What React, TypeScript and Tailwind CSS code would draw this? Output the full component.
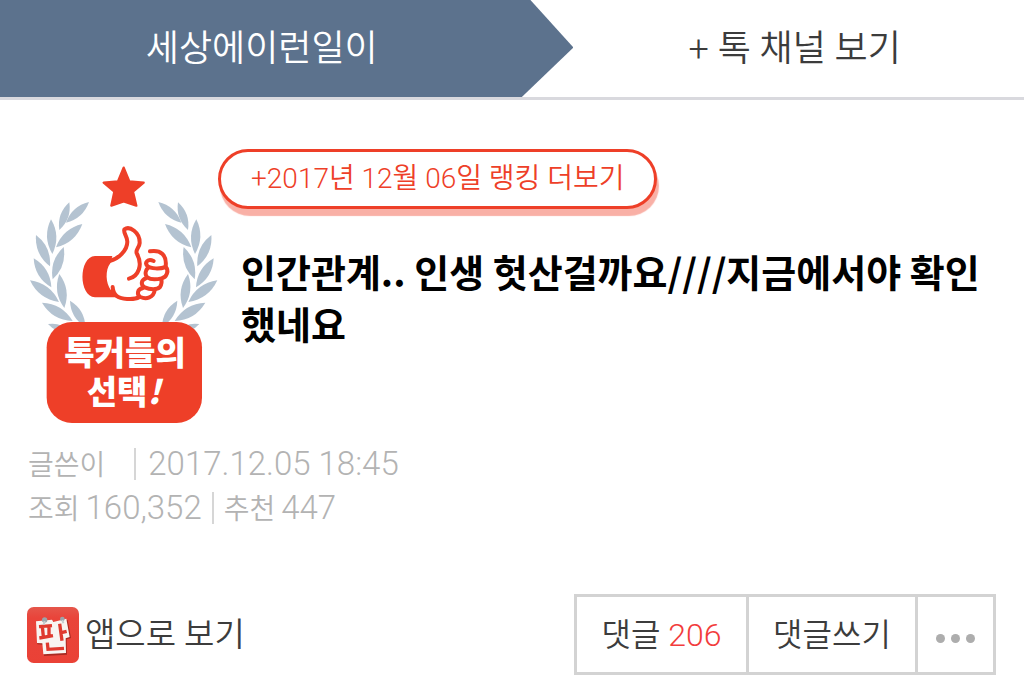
import { Fragment } from 'react';

type Leaf = [number, number, number, number];

// tip x, tip y, base x, base y
const leaves: Leaf[] = [
  [207, 156, 138, 218],
  [148, 157, 118, 240],
  [187, 222, 108, 292],
  [93, 208, 97, 312],
  [48, 255, 90, 349],
  [131, 291, 98, 388],
  [41, 325, 94, 412],
  [30, 391, 117, 456],
  [118, 372, 133, 474],
  [66, 458, 158, 513],
  [150, 452, 196, 530],
  [84, 522, 150, 545],
];

const leafPath = ([x1, y1, x2, y2]: Leaf) => {
  const dx = (x2 - x1) * 0.27;
  const dy = (y2 - y1) * 0.27;
  const mx = (x1 + x2) / 2;
  const my = (y1 + y2) / 2;
  return `M${x1} ${y1}Q${mx - dy} ${my + dx} ${x2} ${y2}Q${mx + dy} ${my - dx} ${x1} ${y1}Z`;
};

const Laurel = () => (
  <g fill="#b4c3d1">
    {leaves.map((leaf) => (
      <path key={leaf.join('-')} d={leafPath(leaf)} />
    ))}
  </g>
);

const TalkerBadge = () => (
  <svg
    viewBox="21 45 579 780"
    className="h-[260px] w-[193px] shrink-0"
    role="img"
    aria-label="톡커들의 선택!"
  >
    <Laurel />
    <g transform="translate(622 0) scale(-1 1)">
      <Laurel />
    </g>
    <path
      d="M311 53L328 94L371 98L339 125L349 167L311 154L274 167L283 125L251 98L294 94Z"
      fill="#ee3f28"
      stroke="#ee3f28"
      strokeWidth="7"
      strokeLinejoin="round"
    />
    <g transform="translate(165 195)">
      <path
        d="M112 123H60C10 126 10 244 60 247H126L112 212L108 226C92 205 90 165 106 145Z"
        fill="#ee3f28"
      />
      <g
        fill="none"
        stroke="#ee3f28"
        strokeWidth="12"
        strokeLinecap="round"
        strokeLinejoin="round"
      >
        <path d="M104 138C130 132 157 106 157 80C157 64 144 54 148 43C164 32 195 52 194 84C193 98 181 104 185 115C205 150 190 184 162 191" />
        <path d="M113 216C114 236 126 251 156 252C172 253 182 253 192 247" />
        <path d="M225 109C258 104 276 120 272 154" />
        <path d="M236 138C218 130 208 142 217 153C228 162 255 162 272 156C283 166 275 188 260 190C244 194 226 194 217 187C208 178 212 166 219 158" />
        <path d="M213 190C198 194 196 211 209 217C225 224 246 225 255 216C260 208 261 201 259 194" />
        <path d="M203 220C186 222 185 240 196 246C214 254 236 248 239 226" />
      </g>
    </g>
    <rect x="80" y="516" width="466" height="303" rx="76" fill="#ee3f28" />
    <text
      fill="#fff"
      fontFamily="'Noto Sans CJK KR', sans-serif"
      fontWeight="900"
      fontSize="99"
    >
      <tspan x="133" y="645">톡커들의</tspan>
      <tspan x="200" y="761">선택</tspan>
      <tspan fontStyle="italic">!</tspan>
    </text>
  </svg>
);

const AppIcon = () => (
  <svg viewBox="0 0 156 168" className="h-14 w-[52px] shrink-0" aria-hidden="true">
    <defs>
      <linearGradient id="appRed" x1="0" y1="0" x2="0" y2="1">
        <stop offset="0" stopColor="#e5564b" />
        <stop offset="0.2" stopColor="#e9443a" />
        <stop offset="1" stopColor="#ea4136" />
      </linearGradient>
    </defs>
    <rect width="156" height="168" rx="20" fill="url(#appRed)" />
    <path
      d="M33 47L78 42L81 48L122 39L132 93L119 97L120 143L51 147L48 113L31 112Z"
      fill="#a92920"
    />
    <path
      d="M27 43L75 38L79 45L118 35L128 90L116 94L117 138L49 142L46 109L30 108Z"
      fill="#f8f4f1"
    />
    <g fill="none" stroke="#df3a2f" strokeWidth="10">
      <path d="M36 59L75 56M46 58L49 89M66 57L66 86M37 93L78 86" />
      <path d="M98 50L105 101M103 77L119 73" />
      <path d="M61 107L63 127L111 124" />
    </g>
    <circle cx="53" cy="39" r="8" fill="#9aa5aa" />
    <circle cx="106" cy="36" r="7" fill="#9aa5aa" />
    <path d="M53 42L50 53M106 39L109 49" stroke="#c5ced1" strokeWidth="6" />
  </svg>
);

const meta = [
  [
    { label: '글쓴이', value: '' },
    { label: '', value: '2017.12.05 18:45' },
  ],
  [
    { label: '조회', value: '160,352' },
    { label: '추천', value: '447' },
  ],
];

export default function App() {
  return (
    <div className="min-h-screen bg-white font-['Roboto','Noto_Sans_CJK_KR',sans-serif] font-[350] text-[#3c3c3c]">
      <nav className="flex h-[100px] border-b-[3px] border-[#d9d9de] text-4xl">
        <a
          href="#category"
          className="flex w-[56%] items-center justify-center bg-[#5c728d] pr-[50px] text-white [clip-path:polygon(0_0,92.5%_0,100%_49%,91%_100%,0_100%)]"
        >
          세상에이런일이
        </a>
        <a href="#channels" className="flex flex-1 items-center justify-center pr-2">
          + 톡 채널 보기
        </a>
      </nav>

      <main>
        <header className="flex items-start px-7 pt-[49px]">
          <div className="-ml-px pt-4">
            <TalkerBadge />
          </div>
          <div className="min-w-0 flex-1">
            <a
              href="#ranking"
              className="-ml-0.5 inline-flex h-[60px] items-center rounded-full border-[3px] border-[#ee3f28] bg-white px-[30px] text-[28px] whitespace-nowrap text-[#ee3f28] shadow-[2px_7px_1px_#f9b0a6]"
            >
              +2017년 12월 06일 랭킹 더보기
            </a>
            <h1 className="mt-9 pl-[21px] font-['Noto_Sans_CJK_KR',sans-serif] text-[38px] leading-[52px] font-bold text-black">
              인간관계.. 인생 헛산걸까요////지금에서야 확인했네요
            </h1>
          </div>
        </header>

        <div className="mt-[17px] px-7 text-[28px] leading-[44px] text-[#b3b3b3]">
          {meta.map((row, i) => (
            <p key={i} className="flex h-11 items-baseline">
              {row.map(({ label, value }, j) => (
                <Fragment key={j}>
                  {j > 0 && (
                    <span
                      className={`h-8 w-0.5 self-center bg-[#d6d6d6] ${i === 0 ? 'mr-3 ml-[29px]' : 'mx-2.5'}`}
                    />
                  )}
                  {label && <span>{label}</span>}
                  {value && (
                    <span className={`text-[33px] ${label ? 'ml-1.5' : ''}`}>{value}</span>
                  )}
                </Fragment>
              ))}
            </p>
          ))}
        </div>

        <footer className="mt-16 flex items-center justify-between px-7">
          <a href="#app" className="-ml-px flex items-center gap-1.5 text-[33px]">
            <AppIcon />
            앱으로 보기
          </a>
          <div className="flex h-[81px] divide-x-[3px] divide-[#d3d3d3] border-[3px] border-[#d3d3d3] text-[32px]">
            <button type="button" className="w-[172px]">
              댓글 <span className="text-[#f23c3c]">206</span>
            </button>
            <button type="button" className="w-[169px]">
              댓글쓰기
            </button>
            <button
              type="button"
              aria-label="더 보기"
              className="flex w-[75px] items-center justify-center gap-1.5 pt-2"
            >
              <span className="size-[9px] rounded-full bg-[#adadad]" />
              <span className="size-[9px] rounded-full bg-[#adadad]" />
              <span className="size-[9px] rounded-full bg-[#adadad]" />
            </button>
          </div>
        </footer>
      </main>
    </div>
  );
}
